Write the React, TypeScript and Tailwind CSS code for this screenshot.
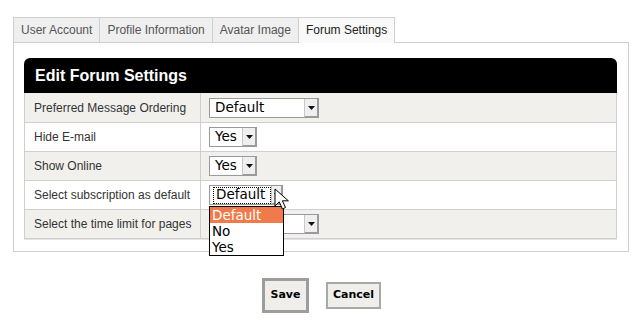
const tabs = ["User Account", "Profile Information", "Avatar Image", "Forum Settings"];

const Arrow = () => (
  <span className="flex h-full w-[14px] items-center justify-center border-l border-[#c8c8c8] bg-[#efefef] shadow-[inset_-1px_-1px_0_#9a9a9a]">
    <svg width="7" height="4" viewBox="0 0 7 4">
      <path d="M0 0h7L3.5 4z" fill="#111" />
    </svg>
  </span>
);

const Select = ({ value, width, focused }: { value: string; width: string; focused?: boolean }) => (
  <div
    className={`flex h-[20px] ${width} items-center border border-[#9a9a9a] bg-white font-['DejaVu_Sans',sans-serif] text-[13.5px] leading-none text-black`}
  >
    <span className="flex flex-1 items-center self-stretch pl-[3px]">
      <span className={focused ? "flex h-[17px] items-center border border-dotted border-black pr-[5px] pl-[2px]" : "pl-[2px]"}>
        {value}
      </span>
    </span>
    <Arrow />
  </div>
);

const Row = ({ label, children, odd }: { label: string; children: React.ReactNode; odd?: boolean }) => (
  <div className={`flex h-[29px] border-b border-[#cfcfcf] ${odd ? "bg-[#f1f0ed]" : "bg-white"}`}>
    <div className="flex w-[176px] items-center border-r border-[#cfcfcf] pl-[9px] text-[12px] text-[#333]">{label}</div>
    <div className="flex flex-1 items-center pl-[8px]">{children}</div>
  </div>
);

export default function App() {
  return (
    <div className="h-[326px] w-[632px] bg-white pt-[17px] pl-[13px] font-['Liberation_Sans',Arial,sans-serif]">
      <div className="flex">
        {tabs.map((t, i) => {
          const active = i === 3;
          return (
            <div
              key={t}
              className={`relative z-10 flex h-[26px] items-center border-t border-r border-[#cfcfcf] px-[7px] pb-[1px] text-[12px] ${
                i === 0 ? "border-l" : ""
              } ${active ? "-mb-px bg-[#f9f9f9] text-[#222]" : "border-b bg-[#efefef] text-[#555]"}`}
            >
              {t}
            </div>
          );
        })}
      </div>
      <div className="-mt-px w-[616px] border border-[#cfcfcf] bg-white pt-[15px] pr-[11px] pb-[12px] pl-[10px]">
        <div className="flex h-[35px] items-center rounded-t-[6px] bg-black pl-[11px] text-[16px] font-bold text-white">
          Edit Forum Settings
        </div>
        <div className="relative border-x border-[#cfcfcf] shadow-[0_1px_0_#e4e4e4]">
          <div className="flex h-[30px] border-b border-[#cfcfcf] bg-[#f1f0ed]">
            <div className="flex w-[176px] items-center border-r border-[#cfcfcf] pl-[9px] text-[12px] text-[#333]">
              Preferred Message Ordering
            </div>
            <div className="flex flex-1 items-center pl-[8px]">
              <Select value="Default" width="w-[110px]" />
            </div>
          </div>
          <Row label="Hide E-mail">
            <Select value="Yes" width="w-[48px]" />
          </Row>
          <Row label="Show Online" odd>
            <Select value="Yes" width="w-[48px]" />
          </Row>
          <Row label="Select subscription as default">
            <div className="relative">
              <Select value="Default" width="w-[74px]" focused />
              <div className="absolute top-[21px] left-0 z-20 w-[75px] border border-black bg-white font-['DejaVu_Sans',sans-serif] text-[13.5px] leading-[16px] text-black">
                <div className="bg-[#f07a4a] pl-[2px] text-white">Default</div>
                <div className="pl-[2px]">No</div>
                <div className="pl-[2px]">Yes</div>
              </div>
              <svg className="absolute top-[3px] left-[65px] z-30" width="15" height="23" viewBox="0 0 15 23">
                <path d="M1 1v17l4.2-4.2 3.2 7.2 3.1-1.5-3.1-6.7h6z" fill="#fff" stroke="#000" strokeWidth="1" strokeLinejoin="round" />
              </svg>
            </div>
          </Row>
          <Row label="Select the time limit for pages" odd>
            <Select value="" width="w-[110px]" />
          </Row>
        </div>
      </div>
      <div className="flex w-[616px] justify-center gap-[17px] pt-[26px] pl-[1px] font-['DejaVu_Sans',sans-serif] text-[11px] font-bold text-black">
        <button className="h-[35px] w-[47px] border-[3px] border-[#9d9d9d] bg-[#efeeea]">Save</button>
        <button className="mt-[4px] h-[27px] w-[55px] border-2 border-[#a8a8a8] bg-[#efeeea]">Cancel</button>
      </div>
    </div>
  );
}
